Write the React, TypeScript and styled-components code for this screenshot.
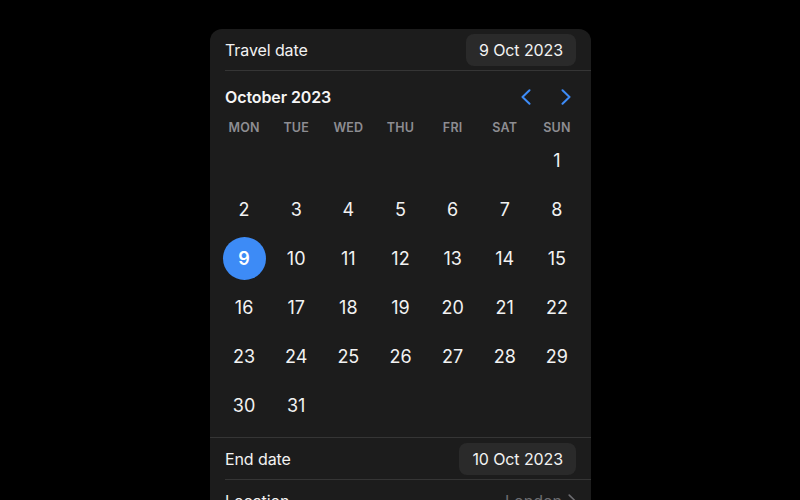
import styled, { createGlobalStyle } from "styled-components";

const GlobalStyle = createGlobalStyle`
  html, body {
    margin: 0;
    padding: 0;
    background: #000;
    overflow: hidden;
  }
  body {
    font-family: Inter, "Noto Sans", sans-serif;
    -webkit-font-smoothing: antialiased;
  }
`;

const Page = styled.div`
  width: 800px;
  height: 500px;
  display: flex;
  justify-content: center;
  padding-top: 29px;
  box-sizing: border-box;
`;

const Card = styled.div`
  width: 381px;
  margin-left: 1px;
  background: #1c1c1c;
  border-radius: 12px;
  align-self: flex-start;
  overflow: hidden;
`;

const Row = styled.div<{ divider?: boolean }>`
  display: flex;
  align-items: center;
  justify-content: space-between;
  height: 41px;
  margin-left: 15px;
  padding-right: 15px;
  border-bottom: ${(props) => (props.divider ? "1px solid #353535" : "none")};
`;

const Label = styled.span`
  font-size: 16px;
  color: #f2f2f2;
  letter-spacing: -0.1px;
`;

const Pill = styled.span`
  height: 32px;
  padding: 0 13px;
  display: flex;
  align-items: center;
  border-radius: 8px;
  background: #2a2a2a;
  font-size: 16px;
  color: #f2f2f2;
  letter-spacing: -0.1px;
`;

const Value = styled.span`
  display: flex;
  align-items: center;
  gap: 6px;
  font-size: 16px;
  color: #6c6c70;
  svg {
    width: 8px;
    height: 13px;
  }
`;

const Calendar = styled.div`
  padding: 16px 8px 7px;
  border-bottom: 1px solid #353535;
`;

const Header = styled.div`
  display: flex;
  align-items: center;
  justify-content: space-between;
  height: 20px;
  padding: 0 7px;
`;

const Month = styled.span`
  font-size: 16px;
  font-weight: 600;
  color: #f5f5f5;
  letter-spacing: -0.1px;
`;

const Nav = styled.div`
  display: flex;
  gap: 20px;
`;

const NavButton = styled.button`
  width: 20px;
  height: 20px;
  padding: 0;
  border: none;
  background: none;
  display: flex;
  align-items: center;
  justify-content: center;
  svg {
    width: 10px;
    height: 16px;
  }
`;

const Weekdays = styled.div`
  display: grid;
  grid-template-columns: repeat(7, 1fr);
  margin-top: 12px;
  height: 17px;
  align-items: center;
`;

const Weekday = styled.span`
  text-align: center;
  font-size: 12.5px;
  line-height: 17px;
  font-weight: 600;
  color: #8d8d92;
  letter-spacing: 0.2px;
`;

const Days = styled.div`
  display: grid;
  grid-template-columns: repeat(7, 1fr);
  grid-auto-rows: 49px;
`;

const DayCell = styled.div`
  display: flex;
  align-items: center;
  justify-content: center;
`;

const Day = styled.span<{ selected?: boolean }>`
  width: 43px;
  height: 43px;
  border-radius: 50%;
  display: flex;
  align-items: center;
  justify-content: center;
  font-size: 18px;
  font-weight: ${(props) => (props.selected ? 600 : 400)};
  color: ${(props) => (props.selected ? "#fff" : "#f2f2f2")};
  background: ${(props) => (props.selected ? "#3d8bf6" : "transparent")};
`;

const Chevron = ({ dir, color }: { dir: "left" | "right"; color: string }) => (
  <svg viewBox="0 0 10 16" fill="none">
    <polyline
      points={dir === "left" ? "8.5,1.2 1.5,8 8.5,14.8" : "1.5,1.2 8.5,8 1.5,14.8"}
      stroke={color}
      strokeWidth="2"
      strokeLinecap="round"
      strokeLinejoin="round"
    />
  </svg>
);

const weekdays = ["MON", "TUE", "WED", "THU", "FRI", "SAT", "SUN"];
const offset = 6;
const cells: (number | null)[] = [
  ...Array(offset).fill(null),
  ...Array.from({ length: 31 }, (_, i) => i + 1),
];

function App() {
  return (
    <>
      <GlobalStyle />
      <Page>
        <Card>
          <Row divider>
            <Label>Travel date</Label>
            <Pill>9 Oct 2023</Pill>
          </Row>
          <Calendar>
            <Header>
              <Month>October 2023</Month>
              <Nav>
                <NavButton>
                  <Chevron dir="left" color="#3d8bf6" />
                </NavButton>
                <NavButton>
                  <Chevron dir="right" color="#3d8bf6" />
                </NavButton>
              </Nav>
            </Header>
            <Weekdays>
              {weekdays.map((d) => (
                <Weekday key={d}>{d}</Weekday>
              ))}
            </Weekdays>
            <Days>
              {cells.map((d, i) => (
                <DayCell key={i}>
                  {d && <Day selected={d === 9}>{d}</Day>}
                </DayCell>
              ))}
            </Days>
          </Calendar>
          <Row divider>
            <Label>End date</Label>
            <Pill>10 Oct 2023</Pill>
          </Row>
          <Row>
            <Label>Location</Label>
            <Value>
              London
              <Chevron dir="right" color="#6c6c70" />
            </Value>
          </Row>
        </Card>
      </Page>
    </>
  );
}

export default App;
